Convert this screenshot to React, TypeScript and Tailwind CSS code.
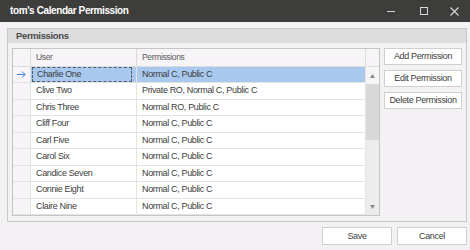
import React from "react";

const rows = [
  ["Charlie One", "Normal C, Public C"],
  ["Clive Two", "Private RO, Normal C, Public C"],
  ["Chris Three", "Normal RO, Public C"],
  ["Cliff Four", "Normal C, Public C"],
  ["Carl Five", "Normal C, Public C"],
  ["Carol Six", "Normal C, Public C"],
  ["Candice Seven", "Normal C, Public C"],
  ["Connie Eight", "Normal C, Public C"],
  ["Claire Nine", "Normal C, Public C"],
];

function Btn({ children }: { children: React.ReactNode }) {
  return (
    <div className="w-[78px] h-[17px] flex items-center justify-center bg-white border border-[#cfcfcf] text-[#3c3c3c] text-[9px] tracking-[-0.35px] leading-none whitespace-nowrap">
      {children}
    </div>
  );
}

export default function App() {
  return (
    <div
      className="w-[470px] h-[250px] flex flex-col bg-[#f4f1f4] overflow-hidden"
      style={{ fontFamily: '"Liberation Sans", Arial, sans-serif' }}
    >
      {/* Title bar */}
      <div className="h-[22px] bg-[#3d3d3b] flex items-center pl-[10px] text-white">
        <div className="text-[10px] tracking-[-0.4px] font-bold leading-none flex-1">tom's Calendar Permission</div>
        <div className="flex items-center text-[#d6d6d6]">
          <div className="w-[34px] flex justify-center">
            <div className="w-[8px] h-[1px] bg-[#d6d6d6] mt-[1px]" />
          </div>
          <div className="w-[32px] flex justify-center">
            <div className="w-[8px] h-[8px] border border-[#d6d6d6]" />
          </div>
          <div className="w-[30px] flex justify-center pr-[2px]">
            <svg width="9" height="9" viewBox="0 0 9 9">
              <path d="M0.5 0.5 L8.5 8.5 M8.5 0.5 L0.5 8.5" stroke="#d6d6d6" strokeWidth="1.2" />
            </svg>
          </div>
        </div>
      </div>

      {/* Group box */}
      <div className="ml-[7px] mr-[3px] mt-[6px] h-[194px] border border-[#c9c9c9] flex flex-col">
        <div className="h-[14px] bg-[#dcdcdc] flex items-center pl-[8px] text-[9.5px] tracking-[-0.35px] font-bold text-[#4a4a4a] leading-none">
          Permissions
        </div>
        <div className="flex pl-[4px] pt-[5px] gap-[4px]">
          {/* Grid */}
          <div className="w-[368px] h-[168px] border border-[#c5c5c5] bg-white flex text-[9px] tracking-[-0.35px] text-[#3c3c3c] leading-none whitespace-nowrap">
            <div className="flex flex-col w-[353px]">
              {/* Header */}
              <div className="flex h-[18px] bg-[#f7f4f7] border-b border-[#dcdcdc] text-[#5a5a5a] text-[8.5px]">
                <div className="w-[18px] border-r border-[#dcdcdc]" />
                <div className="w-[106px] border-r border-[#dcdcdc] flex items-center pl-[5px]">User</div>
                <div className="w-[229px] border-r border-[#dcdcdc] flex items-center pl-[5px]">Permissions</div>
              </div>
              {rows.map(([u, p], i) => {
                const sel = i === 0;
                return (
                  <div key={u} className="flex h-[16.5px] shrink-0">
                    <div className="w-[18px] bg-[#f7f4f7] border-r border-b border-[#e3e0e3] flex items-center justify-center">
                      {sel && (
                        <svg width="9" height="7" viewBox="0 0 9 7">
                          <path d="M0 3.5 H8 M5 0.5 L8 3.5 L5 6.5" stroke="#3b7ddd" strokeWidth="1" fill="none" />
                        </svg>
                      )}
                    </div>
                    <div
                      className={`w-[106px] border-r border-b border-[#e3e3e3] flex items-center pl-[5px] ${
                        sel ? "bg-[#a9c8ee]" : ""
                      }`}
                    >
                      {sel ? (
                        <div className="w-full h-full flex items-center -ml-[4px] pl-[4px] border border-dashed border-[#505a6a]">
                          {u}
                        </div>
                      ) : (
                        u
                      )}
                    </div>
                    <div
                      className={`w-[229px] border-r border-b border-[#e3e3e3] flex items-center pl-[5px] ${
                        sel ? "bg-[#a9c8ee]" : ""
                      }`}
                    >
                      {p}
                    </div>
                  </div>
                );
              })}
            </div>
            {/* Scrollbar column */}
            <div className="w-[13px] flex flex-col">
              <div className="h-[18px] bg-[#f7f4f7] border-b border-[#dcdcdc] shrink-0" />
              <div className="flex-1 flex flex-col bg-[#ececec]">
                <div className="h-[17px] flex items-center justify-center bg-[#f7f4f7]">
                  <svg width="5" height="4" viewBox="0 0 5 4">
                    <path d="M2.5 0 L5 4 L0 4 Z" fill="#8a8a8a" />
                  </svg>
                </div>
                <div className="h-[56px] bg-[#d8d8d8]" />
                <div className="flex-1" />
                <div className="h-[16px] flex items-center justify-center">
                  <svg width="5" height="4" viewBox="0 0 5 4">
                    <path d="M0 0 L5 0 L2.5 4 Z" fill="#8a8a8a" />
                  </svg>
                </div>
              </div>
            </div>
          </div>
          {/* Buttons */}
          <div className="flex flex-col gap-[5px]">
            <Btn>Add Permission</Btn>
            <Btn>Edit Permission</Btn>
            <Btn>Delete Permission</Btn>
          </div>
        </div>
      </div>

      {/* Bottom buttons */}
      <div className="flex justify-end gap-[5px] mr-[3px] mt-[5px]">
        <div className="w-[70px] h-[18px] flex items-center justify-center bg-white border border-[#cfcfcf] text-[9px] tracking-[-0.35px] text-[#3c3c3c] leading-none">
          Save
        </div>
        <div className="w-[70px] h-[18px] flex items-center justify-center bg-white border border-[#cfcfcf] text-[9px] tracking-[-0.35px] text-[#3c3c3c] leading-none">
          Cancel
        </div>
      </div>
    </div>
  );
}
